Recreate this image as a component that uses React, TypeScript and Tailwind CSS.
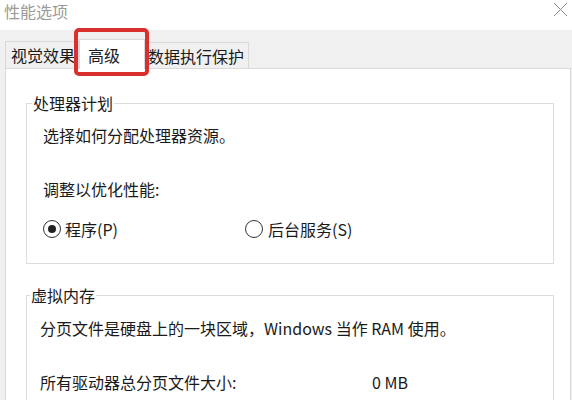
import React from "react";

const font = { fontFamily: '"Noto Sans CJK SC", "Noto Sans", sans-serif' };

function Radio({ checked }: { checked?: boolean }) {
  return (
    <span className="w-[18px] h-[18px] rounded-full border border-[#333333] bg-white flex items-center justify-center shrink-0">
      {checked ? <span className="w-[8px] h-[8px] rounded-full bg-[#222222]" /> : null}
    </span>
  );
}

export default function App() {
  return (
    <div
      className="w-[572px] h-[400px] overflow-hidden bg-white relative flex flex-col text-[#1a1a1a]"
      style={font}
    >
      {/* title bar */}
      <div className="h-[30px] shrink-0 flex items-start justify-between bg-white">
        <span className="ml-[4px] text-[16px] leading-[22px] text-[#9a9a9a]">性能选项</span>
        <svg width="15" height="15" viewBox="0 0 15 15" className="mt-[2px] mr-[4px]">
          <path d="M1 1 L14 14 M14 1 L1 14" stroke="#8a8a8a" strokeWidth="1" fill="none" />
        </svg>
      </div>

      {/* body */}
      <div className="flex-1 bg-[#f0f0f0] pl-[5px] pr-[1px] flex flex-col">
        {/* tabs */}
        <div className="flex items-end h-[38px] shrink-0 relative z-10">
          <div className="h-[27px] w-[74px] border border-b-0 border-[#d9d9d9] bg-[#f0f0f0] pl-[5px] text-[16px] leading-[26px]">
            视觉效果
          </div>
          <div className="h-[30px] w-[66px] border border-b-0 border-[#d9d9d9] bg-white pl-[8px] text-[16px] leading-[30px] -mb-px">
            高级
          </div>
          <div className="h-[26px] w-[104px] border border-b-0 border-l-0 border-[#d9d9d9] bg-[#f0f0f0] pl-[3px] text-[16px] leading-[26px]">
            数据执行保护
          </div>
        </div>

        {/* panel */}
        <div className="flex-1 bg-white border border-[#d9d9d9] flex flex-col pl-[20px] pr-[16px] text-[16px]">
          <fieldset className="mt-[24px] border border-[#dcdcdc]">
            <legend className="ml-[5px] px-[1px] leading-[20px]">处理器计划</legend>
            <div className="pl-[16px] pb-[24px]">
              <div className="leading-[20px] mt-[12px]">选择如何分配处理器资源。</div>
              <div className="leading-[20px] mt-[34px]">调整以优化性能:</div>
              <div className="flex items-center h-[20px] mt-[20px]">
                <div className="flex items-center gap-[4px] w-[202px]">
                  <Radio checked />
                  <span className="leading-[20px]">程序(P)</span>
                </div>
                <div className="flex items-center gap-[5px]">
                  <Radio />
                  <span className="leading-[20px]">后台服务(S)</span>
                </div>
              </div>
            </div>
          </fieldset>

          <fieldset className="mt-[21px] border border-[#dcdcdc]">
            <legend className="ml-[3px] px-[1px] leading-[20px]">虚拟内存</legend>
            <div className="pl-[13px] pb-[24px]">
              <div className="leading-[20px] mt-[13px]">分页文件是硬盘上的一块区域，Windows 当作 RAM 使用。</div>
              <div className="flex leading-[20px] mt-[34px]">
                <span className="w-[332px]">所有驱动器总分页文件大小:</span>
                <span>0 MB</span>
              </div>
            </div>
          </fieldset>
        </div>
      </div>

      {/* red highlight around selected tab */}
      <div className="absolute left-[74px] top-[28px] w-[75px] h-[48px] border-[4px] border-[#d9302f] rounded-[5px] z-20" />
    </div>
  );
}
